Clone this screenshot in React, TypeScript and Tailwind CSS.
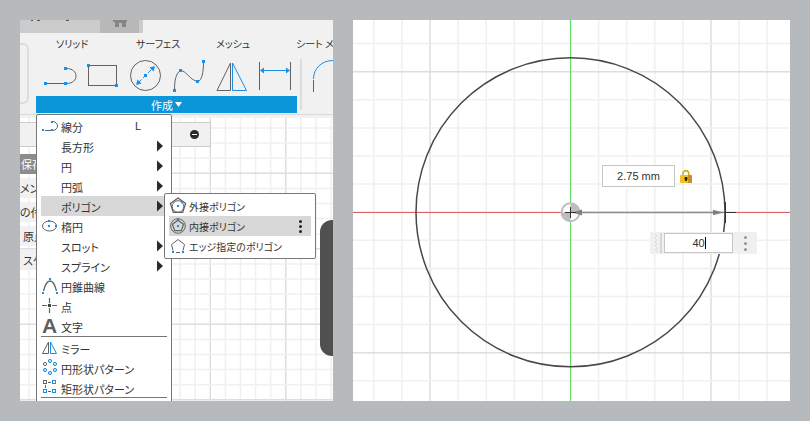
import type { ReactNode } from "react";

const BLUE = "#1a8fe3";
const INK = "#626266";

function Dots({ at, size = 3 }: { at: [number, number][]; size?: number }) {
  return (
    <>
      {at.map(([x, y]) => (
        <rect key={`${x}-${y}`} x={x - size / 2} y={y - size / 2} width={size} height={size} fill={BLUE} />
      ))}
    </>
  );
}

/* ---------- toolbar ---------- */

const tools: { name: string; art: ReactNode }[] = [
  {
    name: "線分",
    art: (
      <>
        <path d="M7 28.5H26M27 13.5C34 13.5 37 17 37 21S34 28.5 27 28.5" stroke={INK} />
        <Dots at={[[6.5, 28.5], [26.5, 28.5], [26.5, 13.5]]} />
      </>
    ),
  },
  {
    name: "長方形",
    art: (
      <>
        <rect x="6.5" y="10.5" width="28" height="20" stroke={INK} />
        <Dots at={[[6.5, 10.5], [34.5, 30.5]]} />
      </>
    ),
  },
  {
    name: "円",
    art: (
      <>
        <circle cx="20.5" cy="20.5" r="15" stroke={INK} />
        <path d="M13 28L28 13" stroke={BLUE} strokeDasharray="5 2" />
        <path d="M11 30L12.5 24.5L16.5 28.5ZM30 11L28.500 16.500L24.500 12.500Z" fill={BLUE} />
        <Dots at={[[20.5, 20.5]]} />
      </>
    ),
  },
  {
    name: "スプライン",
    art: (
      <>
        <path d="M6.500 35C6.500 25 8 18 12.500 15.500C18 15.500 22 25 29.500 26.500C34 26 35.500 17 35.500 7" stroke={INK} />
        <Dots at={[[6.5, 35.5], [12.5, 15.5], [29.5, 26.5], [35.5, 6.5]]} />
      </>
    ),
  },
  {
    name: "ミラー",
    art: (
      <>
        <path d="M19.500 8V35.500H6Z" stroke={INK} />
        <path d="M21.500 8V35.500H35.500Z" stroke={BLUE} />
      </>
    ),
  },
  {
    name: "寸法",
    art: (
      <>
        <path d="M5.500 7V35M36.500 7V35" stroke={INK} />
        <path d="M8 15.500H34" stroke={BLUE} />
        <path d="M6 15.500L10 12.500V18.500ZM36 15.500L32 12.500V18.500Z" fill={BLUE} />
      </>
    ),
  },
];

function Toolbar() {
  return (
    <header className="relative h-[98px] overflow-hidden bg-[#f1f1f1]">
      <div className="flex h-[13px] w-[123px] bg-[#cbcbcb]">
        <svg className="h-[13px] w-20" viewBox="0 0 80 13" aria-hidden="true">
          <path d="M11 0.500H13M17 0.500H20M46 0.500H49" stroke="#555" />
        </svg>
        <div className="flex w-[39px] justify-center bg-[#b8b8b8]">
          <svg className="h-2 w-4" viewBox="0 0 16 8" aria-hidden="true">
            <path d="M1 0H15V2H14V7H10V3H7V7H3V2H1Z" fill="#858585" />
          </svg>
        </div>
      </div>
      <nav className="ml-9 flex h-[22px] w-80 items-center text-[10px] leading-4 text-[#333]">
        {["ソリッド", "サーフェス", "メッシュ", "シート メッシュ"].map((t) => (
          <button key={t} type="button" className="w-20 shrink-0 text-left whitespace-nowrap">
            {t}
          </button>
        ))}
      </nav>
      <div className="flex">
        <div className="-mt-3 h-[61px] w-[9px] shrink-0 rounded-r-md border-2 border-l-0 border-[#dddddd]" />
        <div className="ml-[7px] w-[261px] shrink-0">
          <div className="flex h-[41px] items-start pl-[3px]">
            {tools.map((t) => (
              <button key={t.name} type="button" aria-label={t.name} className="h-[38px] w-[43px] shrink-0">
                <svg viewBox="0 0 43 38" className="block h-[38px] w-[43px]" fill="none">
                  {t.art}
                </svg>
              </button>
            ))}
          </div>
          <button
            type="button"
            className="flex h-[17px] w-full items-center justify-center gap-0.5 bg-[#0a96d9] text-[11px] leading-4 text-white"
          >
            作成
            <svg viewBox="0 0 7 5" className="h-[5px] w-[7px]" aria-hidden="true">
              <path d="M0 0H7L3.500 5Z" fill="#fff" />
            </svg>
          </button>
        </div>
        <div className="mt-1 ml-[3px] h-[51px] w-0.5 shrink-0 bg-[#dcdcdc]" />
        <button type="button" aria-label="フィレット" className="mt-0.5 ml-2.5 h-[38px] w-[30px] shrink-0">
          <svg viewBox="0 0 30 38" className="block h-[38px] w-[30px]" fill="none">
            <path d="M1.500 22C1.500 11 10 3.500 21 3.500H30" stroke={BLUE} />
            <path d="M1.500 23V35" stroke={INK} />
          </svg>
        </button>
      </div>
      <div className="absolute inset-x-0 bottom-[3px] h-px bg-[#d9d9d9]" />
    </header>
  );
}

/* ---------- menus ---------- */

type Item = { label: string; icon?: ReactNode; more?: boolean; key?: string; on?: boolean };

const pentagon = (cx: number, cy: number, r: number) =>
  [0, 1, 2, 3, 4]
    .map((i) => {
      const a = ((i * 72 - 90) * Math.PI) / 180;
      return `${(cx + r * Math.cos(a)).toFixed(2)},${(cy + r * Math.sin(a)).toFixed(2)}`;
    })
    .join(" ");

const createItems: Item[] = [
  {
    label: "線分",
    key: "L",
    icon: (
      <>
        <path d="M4 14.500H10M12 5.500C15 6 16.500 8 16.500 10S15 14 12 14.500" stroke={INK} />
        <Dots size={2} at={[[2, 14], [11, 14], [11, 6]]} />
      </>
    ),
  },
  { label: "長方形", more: true },
  { label: "円", more: true },
  { label: "円弧", more: true },
  { label: "ポリゴン", more: true, on: true },
  {
    label: "楕円",
    icon: (
      <>
        <ellipse cx="8.500" cy="10" rx="7" ry="5" stroke={INK} />
        <Dots size={2} at={[[8, 10], [8, 5], [15, 10]]} />
      </>
    ),
  },
  { label: "スロット", more: true },
  { label: "スプライン", more: true },
  {
    label: "円錐曲線",
    icon: (
      <>
        <path d="M2.500 15C4 9 6 5 9 5S14 9 15.500 15" stroke={INK} strokeWidth="1.300" />
        <Dots size={2} at={[[2, 17], [9, 3], [16, 17]]} />
      </>
    ),
  },
  {
    label: "点",
    icon: (
      <>
        <path d="M1 9.500H6M11 9.500H16M8.500 2V7M8.500 12V17" stroke={INK} strokeWidth="1.200" />
        <rect x="7" y="8" width="3" height="3" fill="#444" />
      </>
    ),
  },
  { label: "文字" },
];

const patternItems: Item[] = [
  {
    label: "ミラー",
    icon: (
      <>
        <path d="M7.500 4V15.500H1.500Z" stroke={INK} />
        <path d="M9.500 4V15.500H15.500Z" stroke={BLUE} />
      </>
    ),
  },
  {
    label: "円形状パターン",
    icon: (
      <>
        <circle cx="4" cy="6" r="1.600" stroke={INK} />
        {[[9, 3], [14, 6], [14, 12], [9, 15], [4, 12]].map(([x, y]) => (
          <circle key={`${x}${y}`} cx={x} cy={y} r="1.600" stroke={BLUE} fill="#cfe6f8" />
        ))}
      </>
    ),
  },
  {
    label: "矩形状パターン",
    icon: (
      <>
        <rect x="2.500" y="2.500" width="3" height="3" stroke={INK} />
        <path d="M7 4.500H10M4.500 7V10M7 13.500H10" stroke={INK} />
        {[[11.5, 2.5], [2.5, 11.5], [11.5, 11.5]].map(([x, y]) => (
          <rect key={`${x}${y}`} x={x} y={y} width="3" height="3" stroke={BLUE} />
        ))}
      </>
    ),
  },
];

const polygonItems: Item[] = [
  {
    label: "外接ポリゴン",
    icon: (
      <>
        <polygon points={pentagon(9, 10, 8)} stroke={INK} strokeWidth="1.300" />
        <circle cx="9" cy="10.500" r="5.800" stroke={INK} />
        <Dots size={2} at={[[9, 10], [13, 6]]} />
      </>
    ),
  },
  {
    label: "内接ポリゴン",
    on: true,
    icon: (
      <>
        <circle cx="9" cy="10" r="7.300" stroke={INK} />
        <polygon points={pentagon(9, 10, 5.8)} stroke={INK} strokeWidth="1.200" />
        <Dots size={2} at={[[9, 10], [9, 3]]} />
      </>
    ),
  },
  {
    label: "エッジ指定のポリゴン",
    icon: (
      <>
        <path d="M4 14.500L2.500 8.500L9 3.500L15.500 8.500L14 14.500M7 16.500H11" stroke={INK} />
        <Dots size={2} at={[[4, 16], [14, 16]]} />
      </>
    ),
  },
];

function MenuRow({ item }: { item: Item }) {
  return (
    <button
      type="button"
      role="menuitem"
      className={`flex h-5 w-full items-center text-left leading-4 whitespace-nowrap text-[#333] ${item.on ? "bg-[#d8d8d8]" : ""}`}
    >
      <span className="flex size-5 shrink-0 items-center">
        {item.icon && (
          <svg viewBox="0 0 20 20" className="size-5" fill="none" aria-hidden="true">
            {item.icon}
          </svg>
        )}
        {item.label === "文字" && (
          <span aria-hidden="true" className="pl-px font-['Liberation_Sans',sans-serif] text-[21px] leading-5 font-bold text-[#606063]">
            A
          </span>
        )}
      </span>
      <span className="flex-1 pt-px">{item.label}</span>
      {item.key && <kbd className="w-9 font-['Liberation_Sans',sans-serif]">{item.key}</kbd>}
      {item.more && (
        <svg viewBox="0 0 6 12" className="mr-2 h-3 w-1.5" aria-hidden="true">
          <path d="M0 0.500L6 6L0 11.500Z" fill="#2b2b2b" />
        </svg>
      )}
    </button>
  );
}

function CreateMenu() {
  return (
    <div role="menu" aria-label="作成" className="absolute top-[94px] left-4 w-[136px] rounded-xs border border-[#777777] bg-white pt-px pb-4 pl-1 text-[11px]">
      {createItems.map((i) => (
        <MenuRow key={i.label} item={i} />
      ))}
      <div role="separator" className="mr-1 h-0.5 border-t border-[#777777]" />
      {patternItems.map((i) => (
        <MenuRow key={i.label} item={i} />
      ))}
      <div role="separator" className="-mt-px mr-1 border-t border-[#777777]" />
    </div>
  );
}

function PolygonMenu() {
  return (
    <div role="menu" aria-label="ポリゴン" className="absolute top-[173px] left-36 w-[152px] rounded-xs border border-[#777777] bg-white px-1 py-0.5 text-[10px]">
      {polygonItems.map((i) => (
        <div key={i.label} className={`flex items-center ${i.on ? "bg-[#d8d8d8]" : ""}`}>
          <MenuRow item={i} />
          {i.on && (
            <button type="button" aria-label="その他" className="flex w-6 shrink-0 flex-col items-center gap-0.5 pl-0.5">
              <span className="size-[3px] rounded-full bg-[#222]" />
              <span className="size-[3px] rounded-full bg-[#222]" />
              <span className="size-[3px] rounded-full bg-[#222]" />
            </button>
          )}
        </div>
      ))}
    </div>
  );
}

/* ---------- drawing grids ---------- */

function Grid({ x, y, step, cols, rows, major }: { x: number; y: number; step: number; cols: number; rows: number; major: [number, number] }) {
  const tone = (i: number, m: number) => (i % 5 === m ? "#dedede" : "#f0f0f0");
  return (
    <g strokeWidth="1.500">
      {Array.from({ length: cols }, (_, i) => (
        <line key={`v${i}`} x1={x + i * step} x2={x + i * step} y1="0" y2="1200" stroke={tone(i, major[0])} />
      ))}
      {Array.from({ length: rows }, (_, i) => (
        <line key={`h${i}`} y1={y + i * step} y2={y + i * step} x1="0" x2="2400" stroke={tone(i, major[1])} />
      ))}
    </g>
  );
}

function ToolPanel() {
  return (
    <section className="relative flex min-w-0 flex-[313] flex-col overflow-hidden bg-white">
      <Toolbar />
      <div className="relative min-h-0 flex-1 overflow-hidden">
        <svg className="absolute inset-0 h-full w-full" aria-hidden="true">
          <Grid x={9.1} y={10} step={15.1} cols={150} rows={80} major={[2, 3]} />
        </svg>
        <div className="relative mt-1 flex h-[25px] w-[191px] items-center justify-end border border-l-0 border-[#cccccc] bg-[#f1f1f1] pr-[11px]">
          <button type="button" aria-label="折りたたむ">
            <svg viewBox="0 0 9 9" className="size-[9px]">
              <circle cx="4.500" cy="4.500" r="4.500" fill="#2b2b2b" />
              <path d="M2 4.500H7" stroke="#fff" />
            </svg>
          </button>
        </div>
        <ul className="relative mt-[7px] flex w-36 flex-col gap-1 text-[11px] leading-5 whitespace-nowrap text-[#333]">
          <li className="h-5 bg-[#8c8c8c] pl-px text-white">保存</li>
          <li className="h-5 bg-[#f1f1f1]">メント</li>
          <li className="h-5 bg-[#f1f1f1]">の付</li>
          <li className="h-5 bg-[#f1f1f1] pl-[3px]">原点</li>
          <li className="h-5 bg-[#f1f1f1] pl-[3px]">スケッチ</li>
        </ul>
      </div>
      <div className="absolute top-[200px] right-0 h-[136px] w-[13px] rounded-l-xl bg-[#505050]" />
      <CreateMenu />
      <PolygonMenu />
    </section>
  );
}

function SketchPanel() {
  return (
    <section className="relative min-w-0 flex-[437] overflow-hidden bg-white font-['Liberation_Sans',sans-serif]">
      <svg className="absolute inset-0 h-full w-full" fill="none" aria-hidden="true">
        <Grid x={20.8} y={23.6} step={28.1} cols={80} rows={40} major={[2, 1]} />
        <path d="M0 192.500H2400" stroke="#dd6464" />
        <path d="M217.500 0V1200" stroke="#62dc62" />
        <circle cx="217.500" cy="192.300" r="154.500" stroke="#48484a" strokeWidth="1.500" />
        <circle cx="217.500" cy="192.300" r="9" fill="#fff" stroke="#bdbdbd" strokeWidth="2" />
        <path d="M217.500 192.300V183A9.300 9.300 0 0 1 226.800 192.300ZM217.500 192.300V201.600A9.300 9.300 0 0 1 208.200 192.300Z" fill="#bdbdbd" />
        <path d="M219 192.500H372" stroke="#8c8c8c" strokeWidth="1.300" />
        <path d="M220 192.500L229 189.500V195.500ZM370 192.500L360 189.800V195.200Z" fill="#808080" />
        <path d="M212 192.500H223M217.500 187V198M371 192.500H383M372.500 182V203" stroke="#333" />
      </svg>

      <label className="absolute top-[145px] left-[249px] flex items-center gap-[5px]">
        <input
          aria-label="直径"
          defaultValue="2.75 mm"
          className="h-[22px] w-[73px] border border-[#c6c6c6] bg-white text-center text-[11px] text-[#333] outline-none"
        />
        <svg viewBox="0 0 12 13" className="h-[13px] w-3" fill="none" aria-hidden="true">
          <path d="M3 6V3.500A2.800 2.800 0 0 1 8.800 3.500V6" stroke="#dba90c" strokeWidth="1.600" />
          <rect x="0" y="5" width="12" height="8" rx="1" fill="#f0c020" />
          <path d="M8 5H11Q12 5 12 6V12Q12 13 11 13H8Z" fill="#c98d2e" />
          <path d="M4.500 8.500H7.500M6 7V11" stroke="#2e2208" strokeWidth="1.800" />
        </svg>
      </label>

      <div className="absolute top-[212px] left-[297px] flex h-[22px] w-[107px] items-center bg-[#f0f0f0]">
        <svg viewBox="0 0 14 22" className="h-[22px] w-3.5 shrink-0" aria-hidden="true">
          <path d="M5 2L7 4L5 6L7 8L5 10L7 12L5 14L7 16L5 18L7 20" fill="none" stroke="#c4c4c4" strokeDasharray="1 1" />
          <rect x="10" y="1" width="2" height="20" fill="#d6d6d6" />
        </svg>
        <div className="relative">
          <input
            aria-label="エッジの数"
            defaultValue="40"
            className="block h-5 w-[69px] border border-[#c6c6c6] bg-white text-center text-[11px] text-[#333] outline-none"
          />
          <span className="absolute top-1 left-[41px] h-3 w-px bg-black" />
        </div>
        <button type="button" aria-label="オプション" className="flex flex-1 flex-col items-center gap-[3px]">
          <span className="size-[3px] rounded-full bg-[#8f9699]" />
          <span className="size-[3px] rounded-full bg-[#8f9699]" />
          <span className="size-[3px] rounded-full bg-[#8f9699]" />
        </button>
      </div>
    </section>
  );
}

export default function App() {
  return (
    <main className="flex h-screen gap-5 bg-[#b6babd] p-5 font-['Noto_Sans_CJK_JP',sans-serif] [font-feature-settings:'palt']">
      <ToolPanel />
      <SketchPanel />
    </main>
  );
}
